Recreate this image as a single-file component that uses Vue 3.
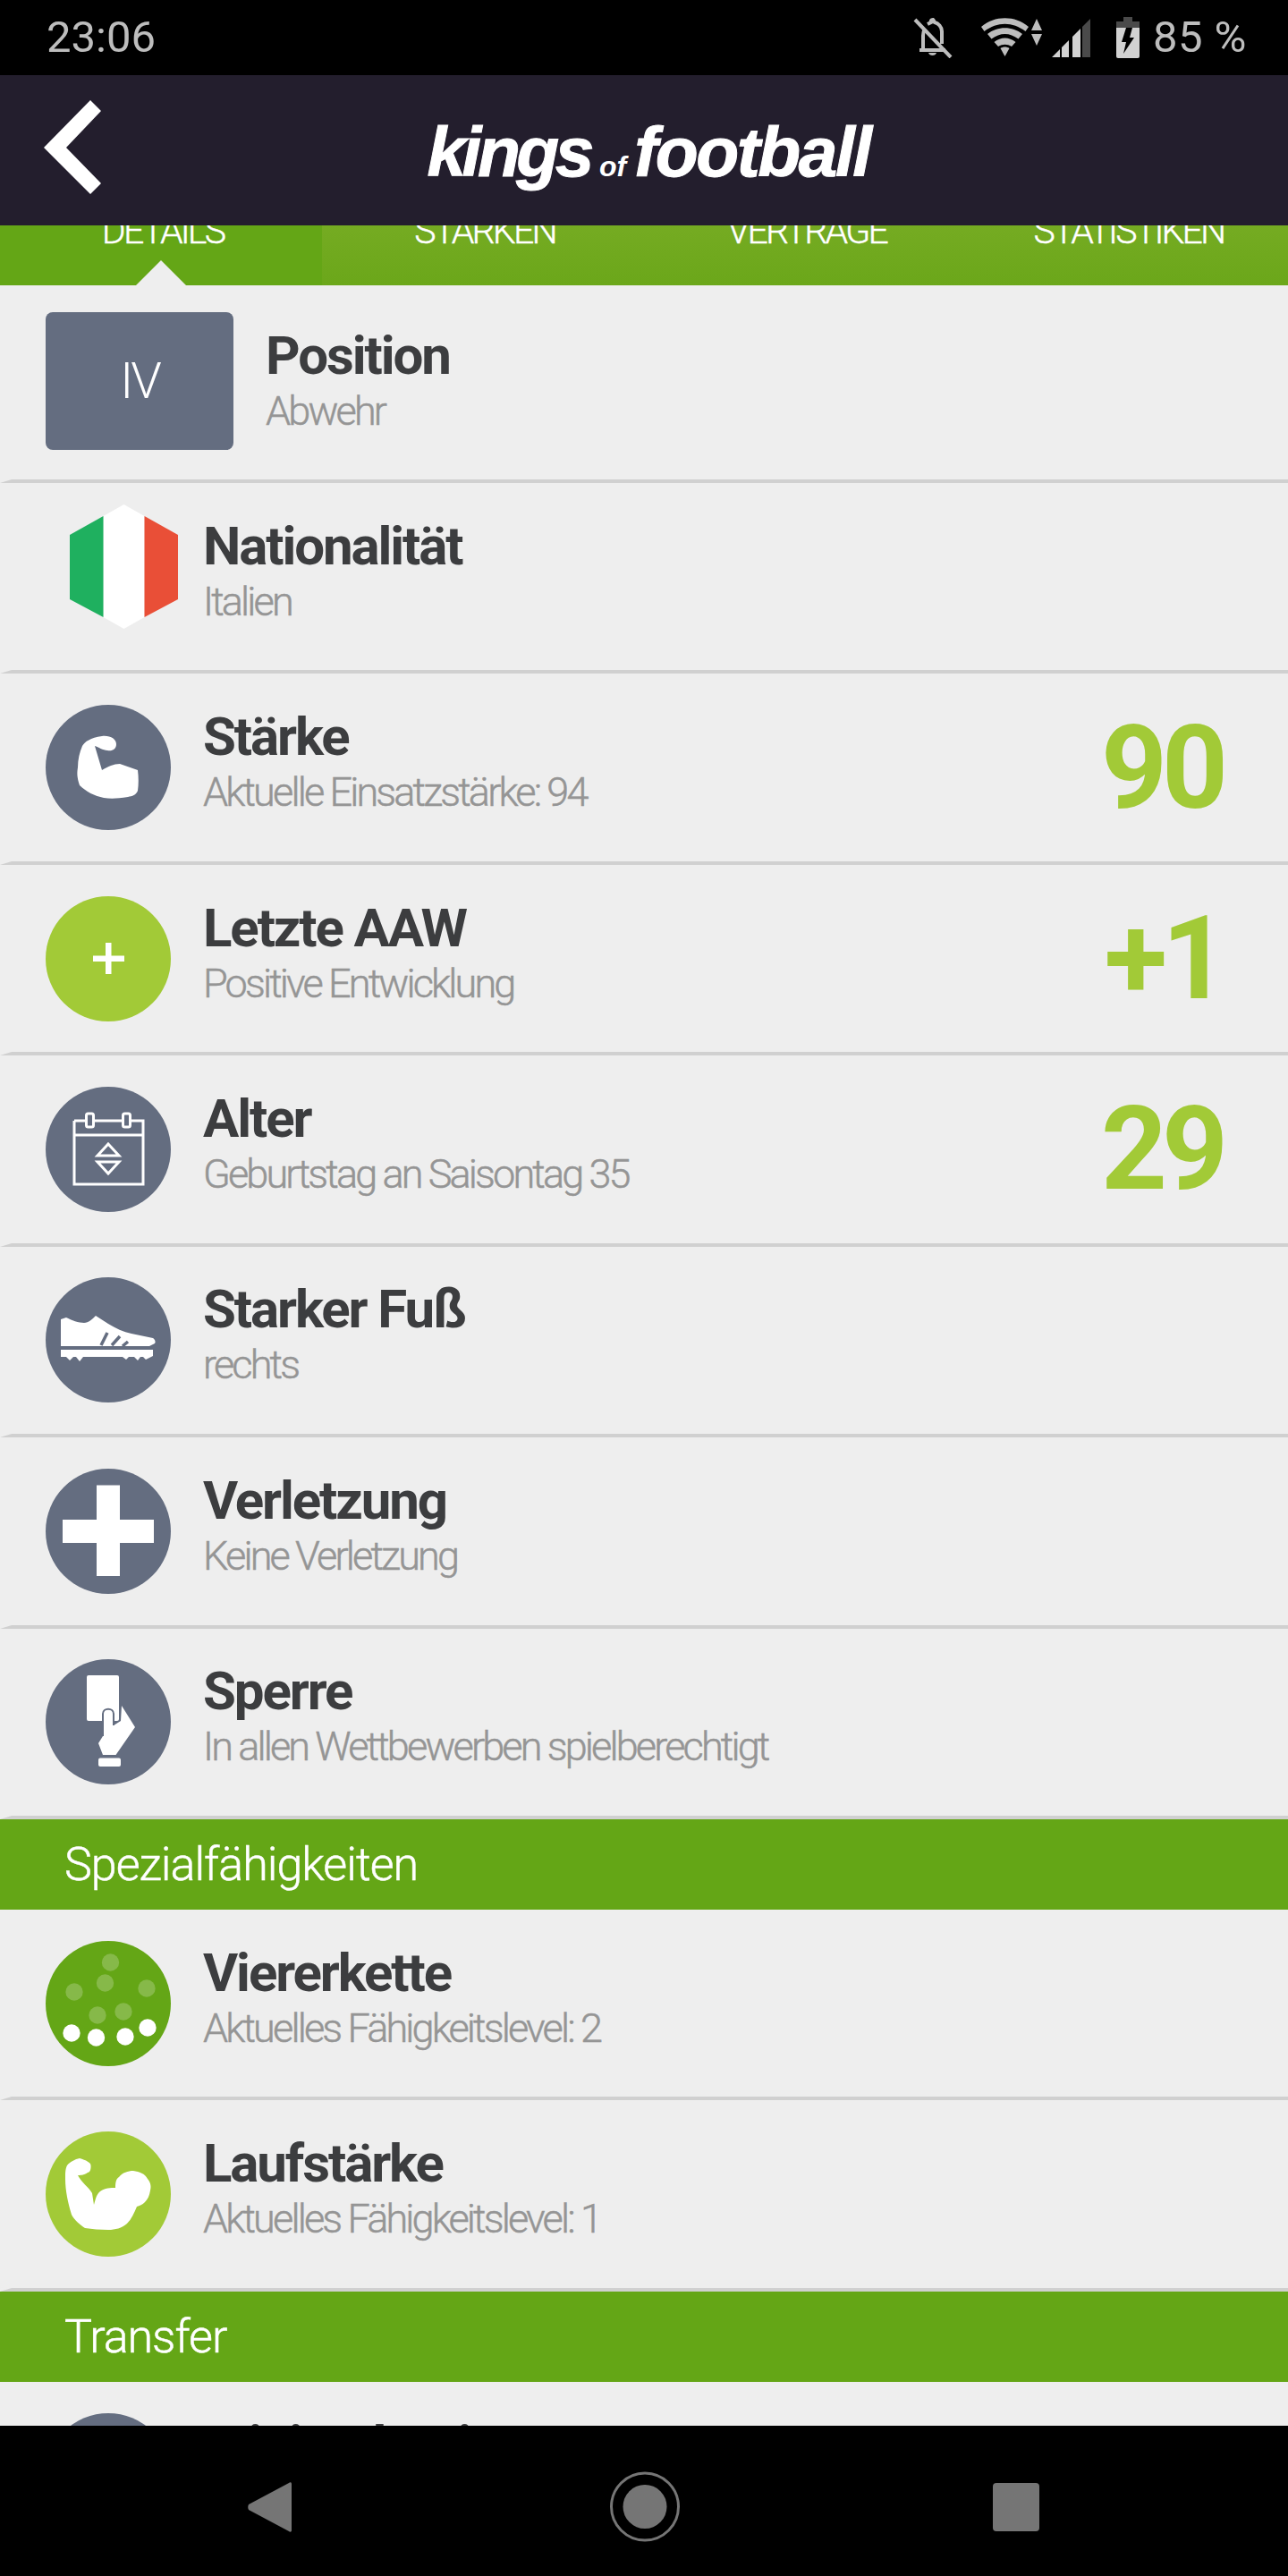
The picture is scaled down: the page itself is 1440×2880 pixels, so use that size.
<script setup>
const tabs = ['DETAILS', 'STÄRKEN', 'VERTRÄGE', 'STATISTIKEN']

const rowsMain = [
  { icon: 'flag', title: 'Nationalität', sub: 'Italien' },
  { icon: 'arm', title: 'Stärke', sub: 'Aktuelle Einsatzstärke: 94', value: '90' },
  { icon: 'plus', title: 'Letzte AAW', sub: 'Positive Entwicklung', value: '+1', lime: true },
  { icon: 'calendar', title: 'Alter', sub: 'Geburtstag an Saisontag 35', value: '29' },
  { icon: 'boot', title: 'Starker Fuß', sub: 'rechts' },
  { icon: 'cross', title: 'Verletzung', sub: 'Keine Verletzung' },
  { icon: 'card', title: 'Sperre', sub: 'In allen Wettbewerben spielberechtigt' }
]

const rowsSkills = [
  { icon: 'dots', title: 'Viererkette', sub: 'Aktuelles Fähigkeitslevel: 2', green: true },
  { icon: 'biceps', title: 'Laufstärke', sub: 'Aktuelles Fähigkeitslevel: 1', lime: true }
]

const fadedDots = [[72.5, 24], [66.5, 47], [32, 57], [113, 53], [58, 83], [87, 79]]
const whiteDots = [[29, 103], [56.5, 108], [89, 107], [114, 97]]
</script>

<template>
  <div class="phone">
    <div class="statusbar">
      <span class="time">23:06</span>
      <div class="status-right">
        <svg class="st-bell" width="46" height="46" viewBox="0 0 46 46">
          <path d="M8 37h29M12 37V21c0-3 1-6 2-8M33 30V16c0-5-4-9-8-10-1-1-1-2-2-3-2 0-3 2-2 3l-4 2" fill="none" stroke="#bdbdbd" stroke-width="4"/>
          <path d="M18 40c1 4 8 4 9 0z" fill="#bdbdbd"/>
          <path d="M3 3l40 42" stroke="#bdbdbd" stroke-width="4"/>
        </svg>
        <svg class="st-wifi" width="68" height="44" viewBox="0 0 68 44">
          <path d="M0 10C15-3 38-3 53 10l-3.500 5C35 4 18 4 3.500 15z" fill="#bdbdbd"/>
          <path d="M7 18C18 9 35 9 46 18l-4.500 5.500C32 16 21 16 11.500 23.500z" fill="#bdbdbd"/>
          <path d="M14.500 27C22 21 31 21 38.500 27L34 32c-5-3-10-3-15 0z" fill="#bdbdbd"/>
          <path d="M21.500 34c3-2 7-2 10 0l-5 9z" fill="#bdbdbd"/>
          <path d="M56 14l6-13 6 13zM56 18h12l-6 13z" fill="#bdbdbd"/>
        </svg>
        <svg class="st-signal" width="44" height="44" viewBox="0 0 44 44">
          <path d="M34 10l9-9v43h-9z" fill="#4a4a4a"/>
          <path d="M0 44l9-9v9zM11 33l8-8v19h-8zM23 21l9-9v32h-9z" fill="#d2d2d2"/>
        </svg>
        <svg class="st-batt" width="26" height="46" viewBox="0 0 26 46">
          <path d="M8 0h10v5h8v7H0V5h8z" fill="#4a4a4a"/>
          <path d="M0 12h26v32a2 2 0 0 1-2 2H2a2 2 0 0 1-2-2z" fill="#d2d2d2"/>
          <path d="M11 12h7l-3 11h5L8 41l3-13H6z" fill="#000"/>
        </svg>
        <span class="pct">85 %</span>
      </div>
    </div>

    <header class="topbar">
      <svg class="back" width="64" height="105" viewBox="0 0 64 105">
        <path d="M52 0l12 12-39 41 39 40-12 12L0 53z" fill="#fff"/>
      </svg>
      <div class="logo"><span class="kings">kings</span><span class="of">of</span><span>football</span></div>
    </header>

    <nav class="tabs">
      <div v-for="(t, i) in tabs" :key="t" class="tab" :class="{ active: i === 0 }">
        <span>{{ t }}</span>
        <i v-if="i === 0" class="tab-arrow"></i>
      </div>
    </nav>

    <main class="list">
      <div class="row row-first">
        <div class="posbox">IV</div>
        <div class="text">
          <div class="title">Position</div>
          <div class="sub">Abwehr</div>
        </div>
      </div>

      <div v-for="r in rowsMain" :key="r.title" class="row">
        <svg v-if="r.icon === 'flag'" class="flag" viewBox="0 0 121 139">
          <path d="M37.500 13L60.500 0 83.500 13V126L60.500 139 37.500 126z" fill="#fff"/>
          <path d="M37.500 13L0 34v72l37.500 20z" fill="#1fb05f"/>
          <path d="M83.500 13L121 34v72l-37.500 20z" fill="#e94f37"/>
        </svg>
        <svg v-else class="circle" viewBox="0 0 140 140">
          <circle cx="70" cy="70" r="70" :fill="r.lime ? '#a2ca37' : '#646d80'"/>
          <path v-if="r.icon === 'arm'" d="M63 35C72 34 79 38 79 44C79 50 74 52 69 51C64 51 59 47 55 46L63 73C70 69 76 66 83 66L103 73C104 81 104 89 103 96C101 101 97 102 92 103C80 105 72 105 65 104C55 102 45 97 38 90C35 81 35 76 36 70C36 61 38 53 41 46C44 41 50 37 63 35Z" fill="#fff"/>
          <path v-if="r.icon === 'plus'" d="M67 35h6.500v14.500H88v6.500H73.500v14H67V56H53v-6.500h14z" fill="#fff" transform="translate(0 17)"/>
          <g v-if="r.icon === 'calendar'" fill="none" stroke="#fff" stroke-width="3">
            <path d="M32 38h13M54 38h32M95 38h14v71H32V38M32 54h77"/>
            <rect x="45.500" y="30" width="8" height="15" rx="2"/>
            <rect x="86.500" y="30" width="8" height="15" rx="2"/>
            <path d="M70 64l12 13H58zM58 84h24L70 97z"/>
          </g>
          <g v-if="r.icon === 'boot'">
            <path d="M17 47l6-2c6 3 14 6 20 6 5 0 9-4 13-8l14 9c8 5 17 9 26 11l24 5c3 2 3 5 2 6l-6 3H17z" fill="#fff"/>
            <path d="M69 62l-7 14M83 66l-9 10M92 72l-6 5" stroke="#646d80" stroke-width="3.500" fill="none"/>
            <path d="M17 81h103v7l-8 4-3-3h-3l-3 4-4-4h-6l-3 3-4-3H42l-4 5-4-5h-3l-4 4-4-4h-6z" fill="#fff"/>
          </g>
          <path v-if="r.icon === 'cross'" d="M57 18.500h26V57h38v26H83v37H57V83H19V57h38z" fill="#fff"/>
          <g v-if="r.icon === 'card'">
            <rect x="46" y="18" width="36" height="51" rx="2" fill="#fff"/>
            <path d="M85 52l15 24-21.500 31H64l-5-13 5-8V61c0-7 12-7 12 0v13l8-5z" fill="#fff"/>
            <path d="M64 86V61c0-7 12-7 12 0v13" fill="none" stroke="#646d80" stroke-width="2"/>
            <rect x="59" y="110.500" width="25" height="9.500" rx="2" fill="#fff"/>
          </g>
        </svg>
        <div class="text">
          <div class="title">{{ r.title }}</div>
          <div class="sub">{{ r.sub }}</div>
        </div>
        <div v-if="r.value" class="value">{{ r.value }}</div>
      </div>

      <div class="section">Spezialfähigkeiten</div>

      <div v-for="r in rowsSkills" :key="r.title" class="row">
        <svg class="circle" viewBox="0 0 140 140">
          <circle cx="70" cy="70" r="70" :fill="r.green ? '#64a616' : '#a2ca37'"/>
          <g v-if="r.icon === 'dots'">
            <circle v-for="(d, i) in fadedDots" :key="i" :cx="d[0]" :cy="d[1]" r="9.700" fill="#fff" opacity="0.22"/>
            <circle v-for="(d, i) in whiteDots" :key="'w' + i" :cx="d[0]" :cy="d[1]" r="9.700" fill="#fff"/>
          </g>
          <path v-if="r.icon === 'biceps'" d="M38 30C45 32 51 35 50.500 38C51 43 49 46 47 46C43 49 38 49 36 49C40 57 48 62 52 69L54 82C56 75 57 70 61 67C66 63 73 63 78 63C78 56 79 53 82 51C86 46 92 44 98 44C105 45 111 47 114 53C118 58 118 62 117 66C116 72 114 76 111 79C108 82 105 83 102 84C99 91 96 98 91 103C85 108 78 110 70 110C61 110 52 109 44 108C38 104 32 99 29 93C25 80 22 66 22 53C22 46 22 42 24 38C27 34 33 31 38 30Z" fill="#fff"/>
        </svg>
        <div class="text">
          <div class="title">{{ r.title }}</div>
          <div class="sub">{{ r.sub }}</div>
        </div>
      </div>

      <div class="section">Transfer</div>

      <div class="row">
        <svg class="circle" viewBox="0 0 140 140"><circle cx="70" cy="70" r="70" fill="#646d80"/></svg>
        <div class="text">
          <div class="title">Minimalpreis</div>
          <div class="sub">Transfermarkt</div>
        </div>
      </div>
    </main>

    <footer class="navbar">
      <svg class="nav-back" width="49" height="56" viewBox="0 0 49 56">
        <path d="M49 2v52c0 2-2 2-3 1L1 31c-1-2-1-4 0-6L46 1c1-1 3-1 3 1z" fill="#757575"/>
      </svg>
      <svg class="nav-home" width="78" height="79" viewBox="0 0 78 79">
        <circle cx="39" cy="39.500" r="37.500" fill="none" stroke="#757575" stroke-width="3"/>
        <circle cx="39" cy="39.500" r="24.500" fill="#757575"/>
      </svg>
      <div class="nav-square"></div>
    </footer>
  </div>
</template>

<style scoped>
.phone {
  width: 1440px;
  height: 2880px;
  display: flex;
  flex-direction: column;
  overflow: hidden;
  background: #eeeeee;
  font-family: Roboto, "Liberation Sans", sans-serif;
}
.statusbar {
  height: 84px;
  flex: none;
  background: #000;
  color: #bdbdbd;
  display: flex;
  align-items: center;
  justify-content: space-between;
  padding: 0 46px 0 52px;
  box-sizing: border-box;
}
.time {
  font-size: 49px;
  line-height: 84px;
}
.status-right {
  display: flex;
  align-items: center;
}
.st-wifi { margin-left: 31px; }
.st-signal { margin-left: 11px; }
.st-batt { margin-left: 28px; }
.pct {
  font-size: 49px;
  line-height: 84px;
  margin-left: 15px;
  letter-spacing: 0.5px;
}
.topbar {
  height: 168px;
  flex: none;
  background: #231e2d;
  position: relative;
  display: flex;
  align-items: center;
  justify-content: center;
  z-index: 2;
}
.back {
  position: absolute;
  left: 49px;
  top: 28px;
}
.logo {
  font-family: "Liberation Sans", Arial, sans-serif;
  font-weight: 700;
  font-style: italic;
  font-size: 78.500px;
  letter-spacing: -2.500px;
  -webkit-text-stroke: 1px #fff;
  color: #fff;
  display: flex;
  align-items: baseline;
  margin-top: 5px;
  padding-left: 10px;
}
.kings {
  letter-spacing: -4.500px;
}
.of {
  font-size: 32px;
  letter-spacing: 0;
  -webkit-text-stroke: 0;
  margin: 0 9px 0 10px;
}
.tabs {
  height: 67px;
  flex: none;
  display: flex;
  overflow: hidden;
  background: linear-gradient(#75ab22, #6ba71a);
}
.tab {
  width: 360px;
  box-sizing: border-box;
  padding-left: 4px;
  position: relative;
  text-align: center;
  color: #fff;
  font-size: 41px;
  font-weight: 300;
  letter-spacing: -2.800px;
  line-height: 41px;
  -webkit-text-stroke: 0.4px;
}
.tab span {
  display: block;
  margin-top: -14px;
}
.tab.active {
  background: #64a616;
}
.tab-arrow {
  position: absolute;
  left: 152px;
  bottom: 0;
  width: 0;
  height: 0;
  border-left: 28.500px solid transparent;
  border-right: 28.500px solid transparent;
  border-bottom: 28px solid #eeeeee;
}
.list {
  flex: 1;
  min-height: 0;
  overflow: hidden;
}
.row {
  height: 213.430px;
  box-sizing: border-box;
  display: flex;
  align-items: center;
  border-bottom: 4px solid #d0d0d0;
  border-left: 13px solid transparent;
  padding: 0 68px 0 38px;
}
.row-first {
  height: 221px;
}
.row-first .text {
  margin-top: 8px;
}
.posbox {
  width: 210px;
  height: 154px;
  flex: none;
  background: #646d80;
  border-radius: 8px;
  color: #fff;
  font-size: 56px;
  font-weight: 300;
  letter-spacing: -3px;
  display: flex;
  align-items: center;
  justify-content: center;
  margin-top: -3px;
}
.circle {
  width: 140px;
  height: 140px;
  flex: none;
}
.flag {
  width: 121px;
  height: 139px;
  flex: none;
  margin: -22px -8px 0 27px;
}
.text {
  margin-left: 36px;
  min-width: 0;
}
.title {
  font-size: 60px;
  line-height: 56px;
  font-weight: 700;
  color: #3c3d3f;
  letter-spacing: -2.100px;
  white-space: nowrap;
}
.sub {
  font-size: 45px;
  line-height: 68px;
  font-weight: 300;
  color: #959595;
  letter-spacing: -2.850px;
  -webkit-text-stroke: 0.5px;
  white-space: nowrap;
}
.value {
  margin-left: auto;
  margin-right: 5px;
  font-size: 129px;
  line-height: 1;
  font-weight: 700;
  letter-spacing: -6px;
  color: #a2ca37;
}
.section {
  height: 101px;
  background: #64a616;
  color: #fff;
  font-size: 52px;
  font-weight: 300;
  letter-spacing: -1px;
  -webkit-text-stroke: 0.5px;
  padding-left: 72px;
  line-height: 101px;
}
.navbar {
  height: 168px;
  flex: none;
  background: #000;
  position: relative;
  z-index: 2;
  display: flex;
  align-items: center;
  padding-left: 277px;
}
.nav-home { margin-left: 356px; margin-top: 12px; }
.nav-back { margin-top: 14px; }
.nav-square {
  width: 52px;
  height: 54px;
  margin-left: 350px;
  margin-top: 14px;
  background: #757575;
  border-radius: 4px;
}
</style>
